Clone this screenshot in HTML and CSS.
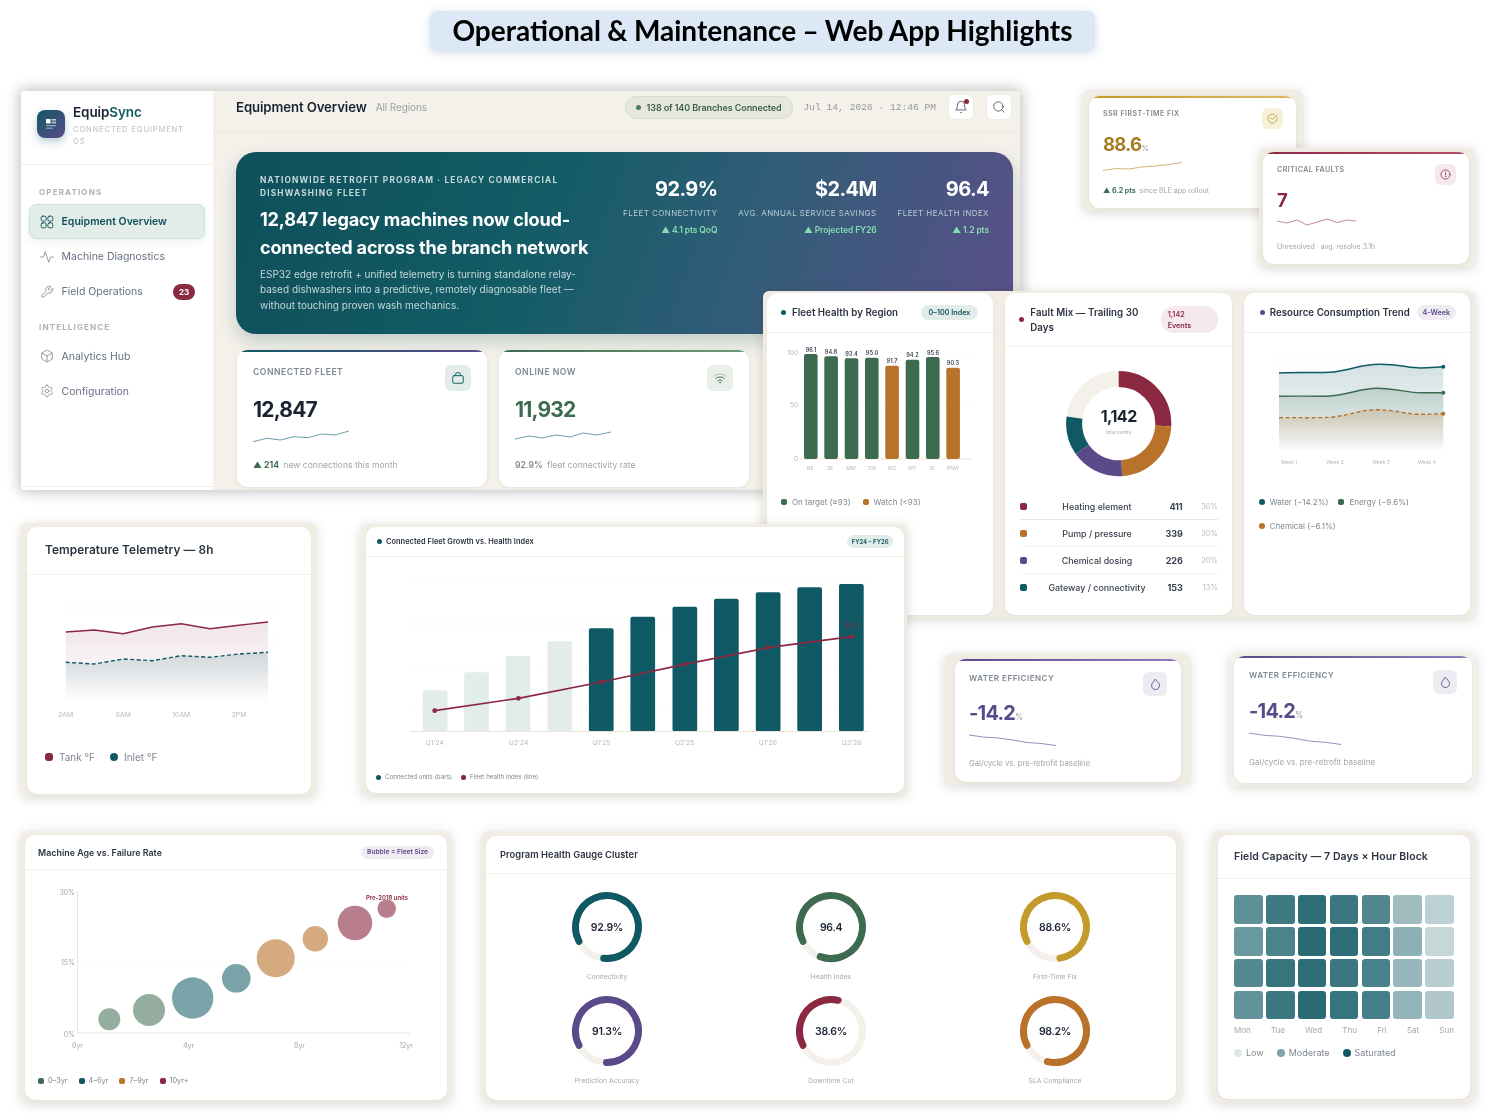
FILE: index.html
```html
<!DOCTYPE html>
<html lang="en">
<head>
<meta charset="utf-8">
<title>Operational &amp; Maintenance – Web App Highlights</title>
<link rel="stylesheet" href="styles.css">
</head>
<body>
<svg class="defs" aria-hidden="true">
  <symbol id="i-grid" viewBox="0 0 24 24"><rect x="2" y="2" width="8.5" height="8.5" rx="2.5"/><rect x="13.5" y="2" width="8.5" height="8.5" rx="2.5"/><rect x="2" y="13.5" width="8.5" height="8.5" rx="2.5"/><rect x="13.5" y="13.5" width="8.5" height="8.5" rx="2.5"/></symbol>
  <symbol id="i-pulse" viewBox="0 0 24 24"><polyline points="23 12 18 12 15 21 9 3 6 12 1 12"/></symbol>
  <symbol id="i-wrench" viewBox="0 0 24 24"><path d="M14.7 6.3a1 1 0 0 0 0 1.4l1.6 1.6a1 1 0 0 0 1.4 0l3.77-3.77a6 6 0 0 1-7.94 7.94l-6.91 6.91a2.12 2.12 0 0 1-3-3l6.91-6.91a6 6 0 0 1 7.94-7.94l-3.76 3.76z"/></symbol>
  <symbol id="i-cube" viewBox="0 0 24 24"><path d="M21 16V8a2 2 0 0 0-1-1.73l-7-4a2 2 0 0 0-2 0l-7 4A2 2 0 0 0 3 8v8a2 2 0 0 0 1 1.73l7 4a2 2 0 0 0 2 0l7-4A2 2 0 0 0 21 16z"/><path d="M3.27 6.96 12 12.01l8.73-5.05"/><path d="M12 22.08V12"/></symbol>
  <symbol id="i-gear" viewBox="0 0 24 24"><path d="M12.22 2h-.44a2 2 0 0 0-2 2v.18a2 2 0 0 1-1 1.73l-.43.25a2 2 0 0 1-2 0l-.15-.08a2 2 0 0 0-2.73.73l-.22.38a2 2 0 0 0 .73 2.73l.15.1a2 2 0 0 1 1 1.72v.51a2 2 0 0 1-1 1.74l-.15.09a2 2 0 0 0-.73 2.73l.22.38a2 2 0 0 0 2.73.73l.15-.08a2 2 0 0 1 2 0l.43.25a2 2 0 0 1 1 1.73V20a2 2 0 0 0 2 2h.44a2 2 0 0 0 2-2v-.18a2 2 0 0 1 1-1.73l.43-.25a2 2 0 0 1 2 0l.15.08a2 2 0 0 0 2.73-.73l.22-.39a2 2 0 0 0-.73-2.73l-.15-.08a2 2 0 0 1-1-1.74v-.5a2 2 0 0 1 1-1.74l.15-.09a2 2 0 0 0 .73-2.73l-.22-.38a2 2 0 0 0-2.73-.73l-.15.08a2 2 0 0 1-2 0l-.43-.25a2 2 0 0 1-1-1.73V4a2 2 0 0 0-2-2z"/><circle cx="12" cy="12" r="3"/></symbol>
  <symbol id="i-bell" viewBox="0 0 24 24"><path d="M6 8a6 6 0 0 1 12 0c0 7 3 9 3 9H3s3-2 3-9"/><path d="M10.3 21a1.94 1.94 0 0 0 3.4 0"/></symbol>
  <symbol id="i-search" viewBox="0 0 24 24"><circle cx="11" cy="11" r="8"/><path d="m21 21-4.3-4.3"/></symbol>
  <symbol id="i-bag" viewBox="0 0 24 24"><rect x="3" y="8" width="18" height="13" rx="2"/><path d="M8 8V5a2 2 0 0 1 2-2h4a2 2 0 0 1 2 2v3"/></symbol>
  <symbol id="i-wifi" viewBox="0 0 24 24"><path d="M2 8.8a15 15 0 0 1 20 0" opacity=".35"/><path d="M5 12.6a10.5 10.5 0 0 1 14 0"/><path d="M8.5 16.4a5.5 5.5 0 0 1 7 0"/><circle cx="12" cy="20" r=".6"/></symbol>
  <symbol id="i-check" viewBox="0 0 24 24"><path d="M21.8 10.5A10 10 0 1 1 16.1 3"/><path d="M21.5 4.5 12 14l-3-3"/></symbol>
  <symbol id="i-alert" viewBox="0 0 24 24"><circle cx="12" cy="12" r="10"/><path d="M12 7v6"/><circle cx="12" cy="16.5" r=".4"/></symbol>
  <symbol id="i-drop" viewBox="0 0 24 24"><path d="M12 2.7l4.9 5.6a7.4 7.4 0 1 1-9.8 0z"/></symbol>
</svg>

<main class="canvas">
  <h1 class="banner">Operational &amp; Maintenance – Web App Highlights</h1>

  <section class="window">
    <aside class="sidebar">
      <div class="brand">
        <div class="logo"><svg viewBox="0 0 28 28"><rect x="9" y="9" width="4.5" height="4.5" fill="#fff"/><rect x="14.5" y="9" width="4.5" height="1.6" fill="#b9cfd6"/><rect x="14.5" y="11.8" width="4.5" height="1.6" fill="#b9cfd6"/><rect x="9" y="15" width="10" height="1.2" fill="#8fa9b8"/><rect x="9" y="17.6" width="7" height="1.2" fill="#8fa9b8"/></svg></div>
        <div class="brand-text">
          <div class="brand-name">Equip<span class="teal">Sync</span></div>
          <div class="brand-sub">CONNECTED EQUIPMENT OS</div>
        </div>
      </div>
      <nav class="nav">
        <div class="nav-label">OPERATIONS</div>
        <a class="nav-item active"><svg class="ico"><use href="#i-grid"/></svg>Equipment Overview</a>
        <a class="nav-item"><svg class="ico"><use href="#i-pulse"/></svg>Machine Diagnostics</a>
        <a class="nav-item"><svg class="ico"><use href="#i-wrench"/></svg>Field Operations<span class="nav-badge">23</span></a>
        <div class="nav-label second">INTELLIGENCE</div>
        <a class="nav-item"><svg class="ico"><use href="#i-cube"/></svg>Analytics Hub</a>
        <a class="nav-item"><svg class="ico"><use href="#i-gear"/></svg>Configuration</a>
      </nav>
      <div class="side-foot"></div>
    </aside>
    <div class="main">
      <header class="topbar">
        <div class="page-title">Equipment Overview</div>
        <div class="page-sub">All Regions</div>
        <div class="status-pill"><span class="status-dot"></span>138 of 140 Branches Connected</div>
        <div class="clock">Jul 14, 2026 · 12:46 PM</div>
        <button class="tool-btn bell"><svg class="ico"><use href="#i-bell"/></svg><span class="bell-dot"></span></button>
        <button class="tool-btn search"><svg class="ico"><use href="#i-search"/></svg></button>
      </header>
      <div class="hero">
        <div class="hero-copy">
          <div class="hero-eyebrow">NATIONWIDE RETROFIT PROGRAM · LEGACY COMMERCIAL DISHWASHING FLEET</div>
          <div class="hero-title">12,847 legacy machines now cloud-connected across the branch network</div>
          <p class="hero-text">ESP32 edge retrofit + unified telemetry is turning standalone relay-based dishwashers into a predictive, remotely diagnosable fleet — without touching proven wash mechanics.</p>
        </div>
        <div class="hero-stats">
          <div class="stat"><div class="stat-val">92.9%</div><div class="stat-lab">FLEET CONNECTIVITY</div><div class="stat-delta">▲ 4.1 pts QoQ</div></div>
          <div class="stat"><div class="stat-val">$2.4M</div><div class="stat-lab">AVG. ANNUAL SERVICE SAVINGS</div><div class="stat-delta">▲ Projected FY26</div></div>
          <div class="stat"><div class="stat-val">96.4</div><div class="stat-lab">FLEET HEALTH INDEX</div><div class="stat-delta">▲ 1.2 pts</div></div>
        </div>
      </div>
      <div class="kpi-row">
        <article class="kpi kpi-lg">
          <div class="kpi-bar bar-brand"></div>
          <div class="kpi-head"><div class="kpi-lab">CONNECTED FLEET</div><div class="kpi-ico ico-teal"><svg class="ico"><use href="#i-bag"/></svg></div></div>
          <div class="kpi-val">12,847</div>
          <svg class="spark" width="96" height="14" viewBox="0 0 96 14"><polyline class="sp-teal" points="0,11.7 13.7,8.3 27.4,10 41,6.7 55,7.7 68.6,4 82,5 96,1"/></svg>
          <div class="kpi-foot"><b class="up">▲ 214</b> new connections this month</div>
        </article>
        <article class="kpi kpi-lg">
          <div class="kpi-bar bar-green"></div>
          <div class="kpi-head"><div class="kpi-lab">ONLINE NOW</div><div class="kpi-ico ico-sage"><svg class="ico"><use href="#i-wifi"/></svg></div></div>
          <div class="kpi-val c-green">11,932</div>
          <svg class="spark" width="96" height="14" viewBox="0 0 96 14"><polyline class="sp-teal" points="0,9 14,6 27,8 41,5 55,7 68,3 82,5 96,2"/></svg>
          <div class="kpi-foot"><span class="foot-strong">92.9%</span> fleet connectivity rate</div>
        </article>
      </div>
    </div>
  </section>

  <section class="frame f-ssr">
    <article class="kpi kpi-sm">
      <div class="kpi-bar bar-gold"></div>
      <div class="kpi-head"><div class="kpi-lab">SSR FIRST-TIME FIX</div><div class="kpi-ico ico-gold"><svg class="ico"><use href="#i-check"/></svg></div></div>
      <div class="kpi-val c-gold">88.6<small>%</small></div>
      <svg class="spark" width="79" height="11" viewBox="0 0 79 11"><polyline class="sp-gold" points="0,9.5 13,7.5 26,8 39,6 52,5 66,3.5 79,1.5"/></svg>
      <div class="kpi-foot"><b class="up">▲ 6.2 pts</b> since BLE app rollout</div>
    </article>
  </section>

  <section class="frame f-crit">
    <article class="kpi kpi-sm">
      <div class="kpi-bar bar-wine"></div>
      <div class="kpi-head"><div class="kpi-lab">CRITICAL FAULTS</div><div class="kpi-ico ico-wine"><svg class="ico"><use href="#i-alert"/></svg></div></div>
      <div class="kpi-val c-wine">7</div>
      <svg class="spark" width="79" height="11" viewBox="0 0 79 11"><polyline class="sp-wine" points="0,4 10,6 20,3 30,8 40,5 50,2 60,5.5 70,3 79,4"/></svg>
      <div class="kpi-foot">Unresolved · avg. resolve 3.1h</div>
    </article>
  </section>

  <section class="frame f-charts">
    <article class="card">
      <header class="card-head h-39"><span class="dot bg-teal"></span><h2 class="card-title">Fleet Health by Region</h2><span class="tag tag-teal">0–100 Index</span></header>
      <svg class="chart" width="226" height="142" viewBox="767 334 226 142">
        <line class="grid" x1="800" x2="972" y1="354" y2="354"/><line class="grid" x1="800" x2="972" y1="407" y2="407"/>
        <line class="axis" x1="800" x2="972" y1="460" y2="460"/>
        <text class="t-tick end" x="798" y="356">100</text><text class="t-tick end" x="798" y="408">50</text><text class="t-tick end" x="798" y="462">0</text>
        <rect class="f-green" x="804" y="355" width="13.6" height="105" rx="2"/><rect class="f-green" x="824.3" y="357.3" width="13.6" height="102.7" rx="2"/><rect class="f-green" x="844.7" y="359.3" width="13.6" height="100.7" rx="2"/><rect class="f-green" x="865" y="358.7" width="13.6" height="101.3" rx="2"/><rect class="f-orange" x="885.3" y="366.7" width="13.6" height="93.3" rx="2"/><rect class="f-green" x="905.7" y="360.7" width="13.6" height="99.3" rx="2"/><rect class="f-green" x="926" y="358" width="13.6" height="102" rx="2"/><rect class="f-orange" x="946.3" y="368.7" width="13.6" height="91.3" rx="2"/>
        <g class="t-barval"><text x="811" y="352.5">96.1</text><text x="831" y="354.5">94.8</text><text x="851.5" y="356.5">93.4</text><text x="872" y="356">95.0</text><text x="892" y="364">91.7</text><text x="912.5" y="358">94.2</text><text x="933" y="355.5">95.6</text><text x="953" y="366">90.3</text></g>
        <g class="t-xs"><text x="810" y="471">NE</text><text x="830" y="471">SE</text><text x="851" y="471">MW</text><text x="872" y="471">SW</text><text x="892" y="471">WC</text><text x="912" y="471">MT</text><text x="932" y="471">GI</text><text x="953" y="471">PNW</text></g>
      </svg>
      <div class="legend lg-fleet"><span class="lg"><i class="sw bg-green"></i>On target (≥93)</span><span class="lg"><i class="sw bg-orange"></i>Watch (&lt;93)</span></div>
    </article>

    <article class="card">
      <header class="card-head h-53"><span class="dot bg-wine"></span><h2 class="card-title wrap">Fault Mix — Trailing 30 Days</h2><span class="tag tag-wine tag-tall">1,142<br>Events</span></header>
      <svg class="chart" width="226" height="146" viewBox="1005 347 226 146">
        <circle class="seg" cx="1118.7" cy="423.7" r="44.6" stroke="#f4f1ea" pathLength="360"/>
        <circle class="seg rot" cx="1118.7" cy="423.7" r="44.6" stroke="#8b2942" pathLength="360" stroke-dasharray="93 267" stroke-dashoffset="0"/>
        <circle class="seg rot" cx="1118.7" cy="423.7" r="44.6" stroke="#b8722a" pathLength="360" stroke-dasharray="83 277" stroke-dashoffset="-93"/>
        <circle class="seg rot" cx="1118.7" cy="423.7" r="44.6" stroke="#5b4a8a" pathLength="360" stroke-dasharray="59 301" stroke-dashoffset="-176"/>
        <circle class="seg rot" cx="1118.7" cy="423.7" r="44.6" stroke="#0f5964" pathLength="360" stroke-dasharray="43 317" stroke-dashoffset="-235"/>
        <text class="t-donut" x="1118.7" y="422">1,142</text>
        <text class="t-donut-sub" x="1118.7" y="433.5">total events</text>
      </svg>
      <div class="rows">
        <div class="row strong"><i class="sw bg-wine"></i><span class="row-lab">Heating element</span><b>411</b><span class="row-pct">36%</span></div>
        <div class="row"><i class="sw bg-orange"></i><span class="row-lab">Pump / pressure</span><b>339</b><span class="row-pct">30%</span></div>
        <div class="row"><i class="sw bg-purple"></i><span class="row-lab">Chemical dosing</span><b>226</b><span class="row-pct">20%</span></div>
        <div class="row"><i class="sw bg-teal"></i><span class="row-lab">Gateway / connectivity</span><b>153</b><span class="row-pct">13%</span></div>
      </div>
    </article>

    <article class="card">
      <header class="card-head h-39 tight"><span class="dot bg-purple"></span><h2 class="card-title">Resource Consumption Trend</h2><span class="tag tag-purple">4-Week</span></header>
      <svg class="chart" width="226" height="135" viewBox="1244 333 226 135">
        <defs>
          <linearGradient id="gW" x1="0" x2="0" y1="0" y2="1"><stop offset="0" stop-color="#0f5964" stop-opacity=".18"/><stop offset="1" stop-color="#0f5964" stop-opacity=".02"/></linearGradient>
          <linearGradient id="gE" x1="0" x2="0" y1="0" y2="1"><stop offset="0" stop-color="#3d6b4f" stop-opacity=".2"/><stop offset="1" stop-color="#3d6b4f" stop-opacity="0"/></linearGradient>
          <linearGradient id="gC" x1="0" x2="0" y1="0" y2="1"><stop offset="0" stop-color="#b8722a" stop-opacity=".22"/><stop offset="1" stop-color="#b8722a" stop-opacity="0"/></linearGradient>
        </defs>
        <line class="grid" x1="1272" x2="1448" y1="360" y2="360"/><line class="grid" x1="1272" x2="1448" y1="386" y2="386"/><line class="grid" x1="1272" x2="1448" y1="412" y2="412"/><line class="grid" x1="1272" x2="1448" y1="439" y2="439"/>
        <path fill="url(#gW)" d="M1279 373C1300 372 1318 373 1330 372.3C1348 371 1360 364.3 1380 364.3C1398 364.3 1410 368 1420 368C1430 368 1436 367 1443.3 366.7V450H1279Z"/>
        <path fill="url(#gE)" d="M1279 396.3C1300 395.8 1318 396.5 1330 396C1348 395 1360 388.3 1376.7 388.3C1395 388.3 1408 392.7 1420 392.7C1430 392.7 1436 392.7 1443.3 392.7V450H1279Z"/>
        <path fill="url(#gC)" d="M1279 417.7C1300 417.5 1318 418 1330 417.3C1348 416 1360 409.7 1376.7 409.7C1395 409.7 1405 414.3 1420 414.3C1430 414.3 1436 414 1443.3 413.7V450H1279Z"/>
        <path class="ln ln-teal" d="M1279 373C1300 372 1318 373 1330 372.3C1348 371 1360 364.3 1380 364.3C1398 364.3 1410 368 1420 368C1430 368 1436 367 1443.3 366.7"/>
        <path class="ln ln-green" d="M1279 396.3C1300 395.8 1318 396.5 1330 396C1348 395 1360 388.3 1376.7 388.3C1395 388.3 1408 392.7 1420 392.7C1430 392.7 1436 392.7 1443.3 392.7"/>
        <path class="ln ln-orange dash" d="M1279 417.7C1300 417.5 1318 418 1330 417.3C1348 416 1360 409.7 1376.7 409.7C1395 409.7 1405 414.3 1420 414.3C1430 414.3 1436 414 1443.3 413.7"/>
        <circle class="f-teal" cx="1443.3" cy="366.7" r="2"/><circle class="f-green" cx="1443.3" cy="392.7" r="2"/><circle class="f-orange" cx="1443.3" cy="413.7" r="2"/>
        <g class="t-xs"><text x="1289" y="464">Week 1</text><text x="1335" y="464">Week 2</text><text x="1381" y="464">Week 3</text><text x="1427" y="464">Week 4</text></g>
      </svg>
      <div class="legend lg-res"><span class="lg"><i class="sw round bg-teal"></i>Water (−14.2%)</span><span class="lg"><i class="sw bg-green"></i>Energy (−9.6%)</span><span class="lg"><i class="sw round bg-orange"></i>Chemical (−6.1%)</span></div>
    </article>
  </section>

  <section class="frame f-temp">
    <article class="card">
      <header class="card-head h-temp"><h2 class="card-title big">Temperature Telemetry — 8h</h2></header>
      <svg class="chart" width="284" height="152" viewBox="27 575 284 152">
        <defs>
          <linearGradient id="gT" x1="0" x2="0" y1="0" y2="1"><stop offset="0" stop-color="#8b2942" stop-opacity=".12"/><stop offset="1" stop-color="#8b2942" stop-opacity="0"/></linearGradient>
          <linearGradient id="gI" x1="0" x2="0" y1="0" y2="1"><stop offset="0" stop-color="#0f5964" stop-opacity=".16"/><stop offset="1" stop-color="#0f5964" stop-opacity="0"/></linearGradient>
        </defs>
        <line class="grid" x1="61" x2="282" y1="608" y2="608"/><line class="grid" x1="61" x2="282" y1="640" y2="640"/><line class="grid" x1="61" x2="282" y1="672" y2="672"/>
        <polygon fill="url(#gT)" points="65.7,632 94.3,630 123.3,633.7 152.3,627 181.3,623.7 210,628.7 239,625.3 268,622 268,702 65.7,702"/>
        <polygon fill="url(#gI)" points="65.7,662.3 94.3,664 123.3,659 152.3,660.7 181.3,655.7 210,657.3 239,654 268,652.3 268,702 65.7,702"/>
        <polyline class="ln ln-wine" points="65.7,632 94.3,630 123.3,633.7 152.3,627 181.3,623.7 210,628.7 239,625.3 268,622"/>
        <polyline class="ln ln-teal dash" points="65.7,662.3 94.3,664 123.3,659 152.3,660.7 181.3,655.7 210,657.3 239,654 268,652.3"/>
        <g class="t-sm"><text x="65.7" y="716.5">2AM</text><text x="123.3" y="716.5">6AM</text><text x="181.3" y="716.5">10AM</text><text x="239" y="716.5">2PM</text></g>
      </svg>
      <div class="legend lg-temp"><span class="lg"><i class="sw bg-wine"></i>Tank °F</span><span class="lg"><i class="sw round bg-teal"></i>Inlet °F</span></div>
    </article>
  </section>

  <section class="frame f-growth">
    <article class="card">
      <header class="card-head h-growth"><span class="dot bg-teal"></span><h2 class="card-title tiny">Connected Fleet Growth vs. Health Index</h2><span class="tag tag-teal tag-xs">FY24 – FY26</span></header>
      <svg class="chart" width="539" height="194" viewBox="366 557 539 194">
        <line class="grid" x1="410" x2="868" y1="583" y2="583"/><line class="grid" x1="410" x2="868" y1="624" y2="624"/><line class="grid" x1="410" x2="868" y1="666" y2="666"/><line class="grid" x1="410" x2="868" y1="707" y2="707"/>
        <g class="f-pale"><rect x="422.7" y="690.3" width="24.7" height="41.2" rx="2"/><rect x="464.2" y="672.3" width="24.7" height="59.2" rx="2"/><rect x="505.6" y="656" width="24.7" height="75.5" rx="2"/><rect x="547.5" y="641.3" width="24.7" height="90.2" rx="2"/></g>
        <g class="f-teal"><rect x="588.9" y="628.3" width="24.7" height="103.2" rx="2"/><rect x="630.4" y="616.7" width="24.7" height="114.8" rx="2"/><rect x="672.5" y="606.7" width="24.7" height="124.8" rx="2"/><rect x="714" y="598.7" width="24.7" height="132.8" rx="2"/><rect x="755.8" y="592.3" width="24.7" height="139.2" rx="2"/><rect x="797.3" y="587.3" width="24.7" height="144.2" rx="2"/><rect x="839" y="584" width="24.7" height="147.5" rx="2"/></g>
        <line class="axis" x1="410" x2="868" y1="731.5" y2="731.5"/>
        <polyline class="ln ln-wine thick" points="434.7,710.7 518.4,698.3 601.3,682 684.5,664.3 767.8,647.7 851.5,636.7"/>
        <g class="f-wine"><circle cx="434.7" cy="710.7" r="2.4"/><circle cx="518.4" cy="698.3" r="2.4"/><circle cx="601.3" cy="682" r="2.4"/><circle cx="684.5" cy="664.3" r="2.4"/><circle cx="767.8" cy="647.7" r="2.4"/><circle cx="851.5" cy="636.7" r="2.4"/></g>
        <text class="t-mark" x="851.5" y="628">96.4</text>
        <g class="t-sm"><text x="434.7" y="745">Q1'24</text><text x="518.4" y="745">Q3'24</text><text x="601.3" y="745">Q1'25</text><text x="684.5" y="745">Q3'25</text><text x="767.8" y="745">Q1'26</text><text x="851.5" y="745">Q3'26</text></g>
      </svg>
      <div class="legend lg-growth"><span class="lg"><i class="sw round bg-teal"></i>Connected units (bars)</span><span class="lg"><i class="sw bg-wine"></i>Fleet health index (line)</span></div>
    </article>
  </section>

  <section class="frame f-water1">
    <article class="kpi kpi-md">
      <div class="kpi-bar bar-purple"></div>
      <div class="kpi-head"><div class="kpi-lab">WATER EFFICIENCY</div><div class="kpi-ico ico-purple"><svg class="ico"><use href="#i-drop"/></svg></div></div>
      <div class="kpi-val c-purple">-14.2<small>%</small></div>
      <svg class="spark" width="87" height="12" viewBox="0 0 87 12" preserveAspectRatio="none"><polyline class="sp-purple" points="0,1 14,3 29,4 44,6 58,8.5 72,9.5 87,11.5"/></svg>
      <div class="kpi-foot">Gal/cycle vs. pre-retrofit baseline</div>
    </article>
  </section>

  <section class="frame f-water2">
    <article class="kpi kpi-md alt">
      <div class="kpi-bar bar-purple"></div>
      <div class="kpi-head"><div class="kpi-lab">WATER EFFICIENCY</div><div class="kpi-ico ico-purple"><svg class="ico"><use href="#i-drop"/></svg></div></div>
      <div class="kpi-val c-purple">-14.2<small>%</small></div>
      <svg class="spark" width="92" height="13" viewBox="0 0 87 12" preserveAspectRatio="none"><polyline class="sp-purple" vector-effect="non-scaling-stroke" points="0,1 14,3 29,4 44,6 58,8.5 72,9.5 87,11.5"/></svg>
      <div class="kpi-foot">Gal/cycle vs. pre-retrofit baseline</div>
    </article>
  </section>

  <section class="frame f-bubble">
    <article class="card">
      <header class="card-head h-bubble"><h2 class="card-title small">Machine Age vs. Failure Rate</h2><span class="tag tag-purple tag-xs tag-wide">Bubble = Fleet Size</span></header>
      <svg class="chart" width="422" height="192" viewBox="25 870 422 192">
        <line class="grid" x1="78" x2="410" y1="962" y2="962"/>
        <line class="axis" x1="77.5" x2="77.5" y1="891" y2="1033"/><line class="axis" x1="77" x2="410" y1="1033" y2="1033"/>
        <g class="t-sm end"><text x="75" y="895">30%</text><text x="75" y="964.5">15%</text><text x="75" y="1037">0%</text></g>
        <g class="t-sm dark"><text x="77.5" y="1048">0yr</text><text x="188.5" y="1048">4yr</text><text x="299.5" y="1048">8yr</text><text x="406" y="1048">12yr</text></g>
        <g class="bub-green"><circle cx="109.3" cy="1019.3" r="11"/><circle cx="149" cy="1010" r="16"/></g>
        <g class="bub-teal"><circle cx="192.7" cy="998" r="20.7"/><circle cx="236.3" cy="978.3" r="14.3"/></g>
        <g class="bub-orange"><circle cx="275.7" cy="958.3" r="19"/><circle cx="315.3" cy="938.7" r="12.7"/></g>
        <g class="bub-wine"><circle cx="355" cy="923" r="17.3"/><circle cx="386.7" cy="908.7" r="9.3"/></g>
        <text class="t-pre" x="387" y="899.5">Pre-2018 units</text>
      </svg>
      <div class="legend lg-bubble"><span class="lg"><i class="sw bg-green"></i>0–3yr</span><span class="lg"><i class="sw bg-teal"></i>4–6yr</span><span class="lg"><i class="sw bg-orange"></i>7–9yr</span><span class="lg"><i class="sw bg-wine"></i>10yr+</span></div>
    </article>
  </section>

  <section class="frame f-gauge">
    <article class="card">
      <header class="card-head h-gauge"><h2 class="card-title mid">Program Health Gauge Cluster</h2></header>
      <div class="gauges">
        <figure class="gauge"><svg class="ring" viewBox="0 0 70 70"><circle class="g-track" cx="35" cy="35" r="31.5"/><circle class="g-arc st-teal" cx="35" cy="35" r="31.5" pathLength="360" stroke-dasharray="303 360"/></svg><span class="g-val">92.9%</span><figcaption>Connectivity</figcaption></figure>
        <figure class="gauge"><svg class="ring" viewBox="0 0 70 70"><circle class="g-track" cx="35" cy="35" r="31.5"/><circle class="g-arc st-green" cx="35" cy="35" r="31.5" pathLength="360" stroke-dasharray="317 360"/></svg><span class="g-val">96.4</span><figcaption>Health Index</figcaption></figure>
        <figure class="gauge"><svg class="ring" viewBox="0 0 70 70"><circle class="g-track" cx="35" cy="35" r="31.5"/><circle class="g-arc st-gold" cx="35" cy="35" r="31.5" pathLength="360" stroke-dasharray="288 360"/></svg><span class="g-val">88.6%</span><figcaption>First-Time Fix</figcaption></figure>
        <figure class="gauge"><svg class="ring" viewBox="0 0 70 70"><circle class="g-track" cx="35" cy="35" r="31.5"/><circle class="g-arc st-purple" cx="35" cy="35" r="31.5" pathLength="360" stroke-dasharray="298 360"/></svg><span class="g-val">91.3%</span><figcaption>Prediction Accuracy</figcaption></figure>
        <figure class="gauge"><svg class="ring" viewBox="0 0 70 70"><circle class="g-track" cx="35" cy="35" r="31.5"/><circle class="g-arc st-wine" cx="35" cy="35" r="31.5" pathLength="360" stroke-dasharray="130 360"/></svg><span class="g-val">38.6%</span><figcaption>Downtime Cut</figcaption></figure>
        <figure class="gauge"><svg class="ring" viewBox="0 0 70 70"><circle class="g-track" cx="35" cy="35" r="31.5"/><circle class="g-arc st-orange" cx="35" cy="35" r="31.5" pathLength="360" stroke-dasharray="311 360"/></svg><span class="g-val">98.2%</span><figcaption>SLA Compliance</figcaption></figure>
      </div>
    </article>
  </section>

  <section class="frame f-heat">
    <article class="card">
      <header class="card-head h-heat"><h2 class="card-title mid2">Field Capacity — 7 Days × Hour Block</h2></header>
      <div class="heat">
        <i style="opacity:.67"></i><i style="opacity:.8"></i><i style="opacity:.87"></i><i style="opacity:.82"></i><i style="opacity:.73"></i><i style="opacity:.4"></i><i style="opacity:.28"></i>
        <i style="opacity:.62"></i><i style="opacity:.75"></i><i style="opacity:.89"></i><i style="opacity:.87"></i><i style="opacity:.79"></i><i style="opacity:.48"></i><i style="opacity:.24"></i>
        <i style="opacity:.71"></i><i style="opacity:.83"></i><i style="opacity:.87"></i><i style="opacity:.82"></i><i style="opacity:.76"></i><i style="opacity:.43"></i><i style="opacity:.3"></i>
        <i style="opacity:.65"></i><i style="opacity:.81"></i><i style="opacity:.89"></i><i style="opacity:.83"></i><i style="opacity:.77"></i><i style="opacity:.45"></i><i style="opacity:.33"></i>
      </div>
      <div class="heat-days"><span>Mon</span><span>Tue</span><span>Wed</span><span>Thu</span><span>Fri</span><span>Sat</span><span>Sun</span></div>
      <div class="legend lg-heat"><span class="lg"><i class="sw round bg-low"></i>Low</span><span class="lg"><i class="sw round bg-mod"></i>Moderate</span><span class="lg"><i class="sw round bg-teal"></i>Saturated</span></div>
    </article>
  </section>
</main>
</body>
</html>
```
FILE: styles.css
```css
* { box-sizing: border-box; }
html, body { margin: 0; padding: 0; background: #fff; }
body { font-family: "Inter", "Liberation Sans", sans-serif; color: #1a2332; }
.defs { position: absolute; width: 0; height: 0; overflow: hidden; }
.canvas { position: relative; width: 1493px; height: 1116px; overflow: hidden; filter: blur(.4px); }

/* free-canvas pieces of the collage */
.banner { position: absolute; left: 430px; top: 11px; width: 665px; height: 40px; margin: 0; padding-bottom: 2px; display: flex; align-items: center; justify-content: center; background: #dce8f5; border-radius: 7px; box-shadow: 0 2px 10px rgba(110,140,175,.3); font: 700 28px/1 "Lato", "Open Sans", sans-serif; word-spacing: -.5px; color: #000; }
.window { position: absolute; left: 21px; top: 91px; width: 999px; height: 399px; display: flex; background: #f4f1ea; border-radius: 3px; overflow: hidden; box-shadow: 0 0 13px 2px rgba(60,60,60,.32); }
.frame { position: absolute; display: flex; background: #f1ede5; border-radius: 6px; box-shadow: 0 2px 12px rgba(60,60,50,.2); }
.f-ssr { left: 1083px; top: 90px; width: 219px; height: 121px; padding: 6px 6px 3px; }
.f-crit { left: 1259px; top: 148px; width: 216px; height: 119px; padding: 4px 6px 3px 4px; }
.f-charts { left: 763px; top: 291px; width: 712px; height: 327px; padding: 2px 5px 3px 4px; gap: 12px; }
.f-temp { left: 21px; top: 523px; width: 295px; height: 273px; padding: 4px 5px 2px 6px; }
.f-growth { left: 361px; top: 524px; width: 546px; height: 271px; padding: 3px 3px 2px 5px; }
.f-water1 { left: 945px; top: 654px; width: 245px; height: 131px; padding: 5px 9px 3px 10px; }
.f-water2 { left: 1230px; top: 652px; width: 246px; height: 134px; padding: 4px 4px 3px 4px; background: #f5f2ec; }
.f-bubble { left: 21px; top: 831px; width: 430px; height: 271px; padding: 4px 4px 2px; }
.f-gauge { left: 482px; top: 831px; width: 699px; height: 271px; padding: 5px 5px 2px 4px; }
.f-heat { left: 1212px; top: 831px; width: 263px; height: 271px; padding: 4px 5px 3px 6px; }

/* sidebar */
.sidebar { width: 192px; flex: none; display: flex; flex-direction: column; background: #fff; }
.brand { height: 74px; padding: 13px 16px 0; display: flex; gap: 8px; border-bottom: 1px solid #f1eee6; }
.logo { width: 28px; height: 28px; margin-top: 6px; flex: none; border-radius: 8px; background: linear-gradient(140deg, #0f5964, #5b4a8a); box-shadow: 0 4px 9px rgba(15,89,100,.28); }
.logo svg { display: block; width: 100%; height: 100%; }
.brand-name { font-size: 13.5px; font-weight: 600; line-height: 16px; letter-spacing: -.1px; }
.teal { color: #0f5964; }
.brand-sub { width: 116px; margin-top: 4px; font-size: 7.5px; line-height: 12px; letter-spacing: .9px; color: #b9bdc1; }
.nav { padding: 22px 8px 0; display: flex; flex-direction: column; }
.nav-label { padding-left: 10px; margin-bottom: 7px; font-size: 8px; line-height: 10px; font-weight: 700; letter-spacing: 1.15px; color: #aeb2b5; }
.nav-label.second { margin-top: 13px; margin-bottom: 6.5px; }
.nav-item { height: 35px; padding: 0 9px 0 10px; display: flex; align-items: center; gap: 7.5px; border: 1px solid transparent; border-radius: 7px; font-size: 10.5px; color: #667080; }
.nav-item.active { background: #e2ede9; border-color: #cbe0dd; box-shadow: 0 3px 8px rgba(15,89,100,.08); color: #124f59; font-weight: 600; }
.ico { width: 14px; height: 14px; flex: none; fill: none; stroke: currentColor; stroke-width: 1.6; stroke-linecap: round; stroke-linejoin: round; }
.nav-item .ico { color: #8d949c; }
.nav-item.active .ico { color: #124f59; }
.nav-badge { margin-left: auto; width: 22px; height: 16px; display: flex; align-items: center; justify-content: center; border-radius: 8px; background: #8b2942; color: #fff; font-size: 8px; font-weight: 700; }
.side-foot { margin-top: auto; height: 4px; border-top: 1px solid #f1eee6; }

/* top bar */
.main { flex: 1; min-width: 0; }
.topbar { height: 41px; padding: 0 8px 8px 23px; display: flex; align-items: center; border-bottom: 1px solid #ece9e0; }
.page-title { font-size: 13.2px; font-weight: 600; letter-spacing: -.1px; }
.page-sub { margin-left: 9px; font-size: 10px; color: #9ba1a8; letter-spacing: -.1px; }
.status-pill { margin-left: auto; height: 23px; padding: 0 10px; display: flex; align-items: center; gap: 6px; background: #e6e8df; border: 1px solid #d7dacf; border-radius: 12px; font-size: 9px; font-weight: 600; letter-spacing: -.1px; color: #3d5f49; }
.status-dot { width: 5px; height: 5px; border-radius: 50%; background: #4f7d60; }
.clock { margin-left: 11px; font: 9.6px "Liberation Mono", monospace; color: #94989a; white-space: nowrap; }
.tool-btn { position: relative; width: 26px; height: 26px; padding: 0; margin-left: 12px; display: flex; align-items: center; justify-content: center; background: #fff; border: 1px solid #efece4; border-radius: 6px; color: #4a5560; }
.tool-btn .ico { width: 14px; height: 14px; stroke-width: 1.5; }
.bell-dot { position: absolute; right: 4px; top: 4px; width: 5px; height: 5px; border-radius: 50%; background: #8b2942; }

/* hero */
.hero { width: 777px; height: 182px; margin: 20px 0 0 23px; padding-left: 24px; display: flex; justify-content: space-between; border-radius: 20px; background: linear-gradient(110deg, #0f4f5a 0, #125c66 38%, #345c79 68%, #5b4f88 100%); box-shadow: 0 7px 18px rgba(15,70,80,.22); }
.hero-copy { width: 340px; padding-top: 22px; }
.hero-eyebrow { font-size: 8.3px; line-height: 13px; font-weight: 700; letter-spacing: 1.2px; color: #c5dadb; }
.hero-title { margin-top: 5px; font-size: 18.1px; line-height: 28px; font-weight: 700; letter-spacing: -.2px; color: #fff; }
.hero-text { margin: 5.5px 0 0; width: 330px; font-size: 10px; line-height: 15.6px; color: #c6d8da; }
.hero-stats { display: flex; gap: 21px; padding: 24px 24px 0 0; text-align: right; }
.stat-val { font-size: 20px; line-height: 26px; font-weight: 700; letter-spacing: -.6px; color: #fff; }
.stat-lab { margin-top: 6px; font-size: 8px; line-height: 10px; letter-spacing: .42px; color: #b6cbd0; }
.stat-delta { margin-top: 7px; font-size: 8.5px; line-height: 10px; font-weight: 600; letter-spacing: -.1px; color: #86dcb2; }

/* KPI cards */
.kpi-row { display: flex; gap: 12px; margin: 16px 0 0 24px; }
.kpi { position: relative; flex: 1; min-width: 0; overflow: hidden; background: #fff; border-radius: 11px; box-shadow: 0 1px 4px rgba(90,80,60,.1); }
.kpi-row .kpi { flex: none; width: 250px; height: 137px; }
.kpi-bar { height: 2px; }
.bar-brand { background: linear-gradient(90deg, #0f5964, #5b4a8a); }
.bar-green { background: linear-gradient(90deg, #3d6b4f, #6f9a7d); }
.bar-gold { background: linear-gradient(90deg, #c49a2c, #dcbb62); }
.bar-wine { background: linear-gradient(90deg, #8b2942, #b84e68); }
.bar-purple { background: linear-gradient(90deg, #5b4a8a, #8f7cc0); }
.kpi-head { display: flex; justify-content: space-between; align-items: flex-start; }
.kpi-lab { font-weight: 600; letter-spacing: .5px; color: #7f8791; }
.kpi-ico { display: flex; align-items: center; justify-content: center; flex: none; border-radius: 6px; }
.ico-teal { background: #e2ede9; color: #0f5964; }
.ico-sage { background: #e8efe9; color: #3d6b4f; }
.ico-gold { background: #f8f1d9; color: #b08d2a; }
.ico-wine { background: #f5e9ec; color: #8b2942; }
.ico-purple { background: #eeebf3; color: #5b4a8a; }
.kpi-val { font-weight: 700; letter-spacing: -.8px; color: #1a2332; }
.kpi-val small { font-size: .42em; font-weight: 400; line-height: 0; letter-spacing: 0; color: #9aa0a8; }
.c-green { color: #3d6b4f; }
.c-gold { color: #a67c20; }
.c-wine { color: #8b2942; }
.c-purple { color: #5b4a8a; }
.spark { display: block; overflow: visible; }
.spark polyline { fill: none; stroke-width: 1; stroke-linejoin: round; }
.sp-teal { stroke: #6aa0a8; }
.sp-gold { stroke: #d2b67c; }
.sp-wine { stroke: #c98a9b; }
.sp-purple { stroke: #9b8cc2; }
.kpi-foot { color: #a0a6ad; }
.kpi-foot b { font-weight: 700; margin-right: 2px; }
.up { color: #3d6b4f; }
.foot-strong { font-weight: 600; color: #7f8791; margin-right: 2px; }

.kpi-lg .kpi-head { padding: 13px 16px 0; }
.kpi-lg .kpi-lab { padding-top: 2px; font-size: 8.6px; line-height: 10px; }
.kpi-lg .kpi-ico { width: 26px; height: 26px; }
.kpi-lg .kpi-ico .ico { width: 14px; height: 14px; }
.kpi-lg .kpi-val { margin: 6px 16px 0; font-size: 21px; line-height: 26px; }
.kpi-lg .spark { margin: 7px 16px 0; }
.kpi-lg .kpi-foot { margin: 16px 16px 0; font-size: 8.6px; line-height: 10px; }

.kpi-sm .kpi-head { padding: 10px 13px 0 14px; }
.kpi-sm .kpi-lab { padding-top: 1px; font-size: 7px; line-height: 9px; }
.kpi-sm .kpi-ico { width: 21px; height: 21px; }
.kpi-sm .kpi-ico .ico { width: 11px; height: 11px; }
.kpi-sm .kpi-val { margin: 4px 14px 0; font-size: 18.5px; line-height: 22px; }
.kpi-sm .spark { margin: 6px 14px 0; }
.kpi-sm .kpi-foot { margin: 13.5px 14px 0; font-size: 7px; line-height: 9px; }

.kpi-md .kpi-head { padding: 11px 14px 0; }
.kpi-md .kpi-lab { padding-top: 1px; font-size: 8px; line-height: 10px; }
.kpi-md .kpi-ico { width: 24px; height: 24px; }
.kpi-md .kpi-ico .ico { width: 13px; height: 13px; }
.kpi-md .kpi-val { margin: 5px 14px 0; font-size: 20px; line-height: 24px; }
.kpi-md .spark { margin: 9px 14px 0; }
.kpi-md .kpi-foot { margin: 12.5px 14px 0; font-size: 7.7px; line-height: 9px; }
.kpi-md.alt .kpi-head { padding: 12px 15px 0; }
.kpi-md.alt .kpi-lab { padding-top: 0; }
.kpi-md.alt .kpi-val, .kpi-md.alt .spark { margin-left: 15px; }
.kpi-md.alt .kpi-foot { margin: 13px 15px 0; font-size: 8px; }

/* chart cards */
.card { flex: 1; min-width: 0; background: #fff; border-radius: 10px; overflow: hidden; box-shadow: 0 1px 3px rgba(90,80,60,.08); }
.card-head { display: flex; align-items: center; border-bottom: 1px solid #f3f0e9; }
.h-39 { height: 40px; padding: 0 15px 0 14px; gap: 6px; }
.h-39.tight { padding: 0 14px 0 16px; gap: 5px; }
.h-39.tight .tag { padding: 0 6px; }
.h-53 { height: 54px; padding: 0 14px 0 14px; gap: 6px; }
.h-temp { height: 48px; padding: 0 18px; }
.h-growth { height: 30px; padding: 0 11px 0 11px; gap: 4px; }
.h-bubble { height: 35px; padding: 0 13px; justify-content: space-between; }
.h-gauge { height: 38px; padding: 0 14px; }
.h-heat { height: 44px; padding: 0 16px; }
.dot { width: 5px; height: 5px; flex: none; border-radius: 50%; }
.card-title { margin: 0; font-size: 9.7px; line-height: 15px; font-weight: 600; color: #2a3340; letter-spacing: .05px; white-space: nowrap; }
.card-title.wrap { width: 120px; white-space: normal; }
.card-title.big { font-size: 11.8px; letter-spacing: .1px; }
.card-title.tiny { font-size: 7.4px; }
.card-title.small { font-size: 8.8px; }
.card-title.mid { font-size: 9.3px; }
.card-title.mid2 { font-size: 10.5px; letter-spacing: .1px; }
.tag { margin-left: auto; flex: none; padding: 0 8px; height: 15px; display: flex; align-items: center; border-radius: 8px; font-size: 7.2px; font-weight: 600; white-space: nowrap; }
.tag-teal { background: #e2ede9; color: #124f59; }
.tag-wine { background: #f6e9ed; color: #8b2942; }
.tag-purple { background: #eeebf3; color: #5b4a8a; }
.tag-tall { width: 57px; height: 27px; padding: 0 7px; line-height: 11px; border-radius: 13px; white-space: normal; }
.tag-xs { height: 13px; padding: 0 4.5px; font-size: 6px; }
.tag-wide { padding: 0 6px; font-size: 6.6px; }
.chart { display: block; }
.grid { stroke: #ece8de; stroke-width: .8; stroke-dasharray: 1 3; }
.axis { stroke: #ece4d6; stroke-width: 1; }
.ln { fill: none; stroke-width: 1.4; stroke-linejoin: round; }
.ln.thick { stroke-width: 1.7; }
.ln.dash { stroke-dasharray: 4 2.5; }
.ln-teal { stroke: #0f5964; }
.ln-green { stroke: #3d6b4f; }
.ln-orange { stroke: #b8722a; }
.ln-wine { stroke: #8b2942; }
.f-teal { fill: #0f5964; }
.f-green { fill: #3d6b4f; }
.f-orange { fill: #b8722a; }
.f-wine { fill: #8b2942; }
.f-pale { fill: #e2ede9; }
.chart text { font-family: "Inter", "Liberation Sans", sans-serif; }
.t-tick { font-size: 6.5px; fill: #b0b4b8; }
.end, .end text { text-anchor: end; }
.t-barval text { font-size: 5.6px; font-weight: 600; fill: #3a4350; text-anchor: middle; }
.t-xs text { font-size: 5px; fill: #b4b8bc; text-anchor: middle; }
.t-sm text { font-size: 6.8px; fill: #b6babe; text-anchor: middle; }
.t-sm.end text { text-anchor: end; font-size: 7px; fill: #a0a5ab; }
.t-sm.dark text { font-size: 7px; fill: #a0a5ab; }
.t-mark { font-size: 7.8px; fill: #8b2942; text-anchor: middle; opacity: .75; }
.t-pre { font-size: 6px; font-weight: 600; fill: #8b2942; text-anchor: middle; }
.seg { fill: none; stroke-width: 16; }
.rot { transform: rotate(-90deg); transform-origin: 1118.7px 423.7px; }
.t-donut { font-size: 16px; font-weight: 700; letter-spacing: -.5px; fill: #1a2332; text-anchor: middle; }
.t-donut-sub { font-size: 4.6px; fill: #a6a9ad; text-anchor: middle; }
.bub-green { fill: #3d6b4f; opacity: .55; }
.bub-teal { fill: #0f5964; opacity: .55; }
.bub-orange { fill: #b8722a; opacity: .6; }
.bub-wine { fill: #8b2942; opacity: .6; }

/* legends */
.legend { display: flex; flex-wrap: wrap; font-size: 8px; line-height: 10px; color: #7f8791; }
.lg { display: inline-flex; align-items: center; }
.sw { display: block; width: 6px; height: 6px; flex: none; border-radius: 2px; }
.sw.round { border-radius: 50%; }
.bg-teal { background: #0f5964; }
.bg-green { background: #3d6b4f; }
.bg-orange { background: #b8722a; }
.bg-wine { background: #8b2942; }
.bg-purple { background: #5b4a8a; }
.bg-low { background: #dce8e8; }
.bg-mod { background: #7ba4aa; }
.lg-fleet { margin-top: 22px; padding-left: 14px; gap: 12px; }
.lg-fleet .sw { margin-right: 5px; }
.lg-res { margin-top: 29px; padding: 0 15px; gap: 14px 10px; }
.lg-res .sw { margin-right: 5px; }
.lg-temp { margin-top: 25px; padding-left: 18px; gap: 15px; font-size: 10px; }
.lg-temp .sw { width: 8px; height: 8px; margin-right: 6px; border-radius: 3px; }
.lg-temp .sw.round { border-radius: 50%; }
.lg-growth { margin-top: 21px; padding-left: 10px; gap: 9px; font-size: 6.2px; }
.lg-growth .sw { width: 5px; height: 5px; margin-right: 4px; }
.lg-bubble { margin-top: 14px; padding-left: 13px; gap: 11px; font-size: 7.3px; }
.lg-bubble .sw { margin-right: 4px; }
.lg-heat { margin-top: 13px; padding-left: 16px; gap: 13px; font-size: 9px; }
.lg-heat .sw { width: 8px; height: 8px; margin-right: 4px; }

/* fault rows */
.rows { padding: 0 14px 0 15px; }
.row { height: 27px; display: flex; align-items: center; border-bottom: 1px solid #f6f3ee; font-size: 8.85px; font-weight: 500; color: #38414d; }
.row:last-child { border-bottom: 0; }
.row.strong { border-bottom-color: #ede9df; }
.row .sw { width: 7px; height: 7px; }
.row-lab { flex: 1; text-align: center; padding-left: 8px; }
.row b { width: 24px; text-align: right; font-size: 9px; font-weight: 700; letter-spacing: -.1px; }
.row-pct { width: 35px; text-align: right; font-size: 7.4px; font-weight: 400; color: #b7bbbf; }

/* gauges */
.gauges { padding: 18px 9px 0; display: grid; grid-template-columns: repeat(3, 224px); grid-auto-rows: 104px; }
.gauge { position: relative; margin: 0; display: flex; flex-direction: column; align-items: center; }
.ring { display: block; width: 70px; height: 70px; transform: rotate(153deg); }
.g-track { fill: none; stroke: #f4f1ea; stroke-width: 7; }
.g-arc { fill: none; stroke-width: 7; stroke-linecap: round; }
.st-teal { stroke: #0f5964; }
.st-green { stroke: #3d6b4f; }
.st-gold { stroke: #c49a2c; }
.st-purple { stroke: #5b4a8a; }
.st-wine { stroke: #8b2942; }
.st-orange { stroke: #b8722a; }
.g-val { position: absolute; left: 0; right: 0; top: 29px; text-align: center; font-size: 10.5px; line-height: 14px; font-weight: 600; letter-spacing: -.3px; color: #1a2332; }
.gauge figcaption { margin-top: 10px; font-size: 6.8px; line-height: 10px; color: #a3a8ad; }

/* heat map */
.heat { margin: 16px 16px 0; display: grid; grid-template-columns: repeat(7, 28.7px); grid-auto-rows: 28.7px; gap: 3.2px; }
.heat i { display: block; border-radius: 3px; background: #0f5964; }
.heat-days { margin: 6px 16px 0; display: flex; justify-content: space-between; font-size: 8px; line-height: 10px; color: #a3a8ad; }
```
